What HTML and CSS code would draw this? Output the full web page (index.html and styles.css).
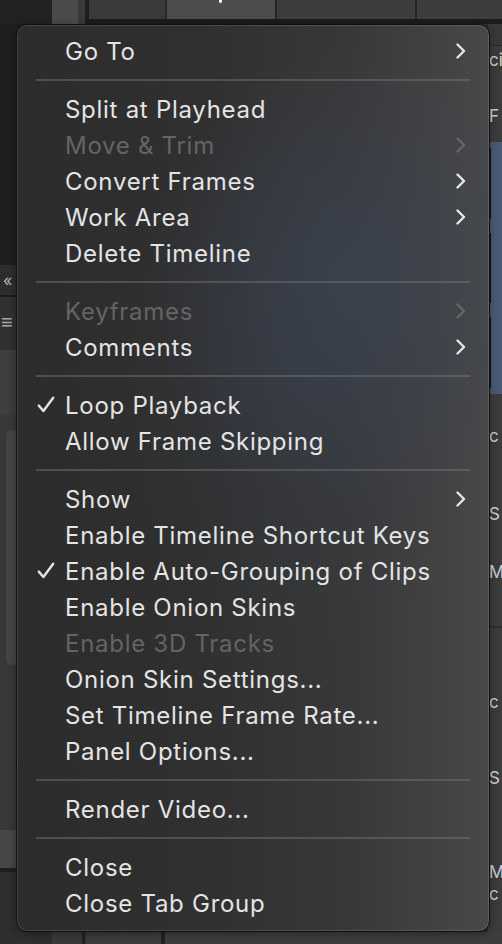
FILE: index.html
```html
<!DOCTYPE html>
<html lang="en">
<head>
<meta charset="utf-8">
<title>Timeline menu</title>
<link rel="stylesheet" href="styles.css">
</head>
<body>
<div class="app">
  <div class="topbar">
    <div class="tb tb-dark"></div>
    <div class="tb tb-light"></div>
    <div class="tb tb-mid"></div>
    <div class="tb tb-gap"></div>
    <div class="tb tb-tab"></div>
    <div class="tb tb-active"><span class="tb-dot"></span></div>
    <div class="tb tb-tab2"></div>
    <div class="tb tb-tab3"></div>
  </div>
  <div class="middle">
    <div class="leftcol">
      <div class="lc lc-dark"></div>
      <div class="lc lc-arrows">&lsaquo;&lsaquo;</div>
      <div class="lc lc-menu">&#8801;</div>
      <div class="lc lc-light"></div>
      <div class="lc lc-panel"><div class="lc-thumb"></div></div>
      <div class="lc lc-band"></div>
      <div class="lc lc-line"></div>
      <div class="lc lc-foot"></div>
    </div>
    <div class="center"></div>
    <div class="rightcol">
      <div class="rc rc-top"></div>
      <div class="rc rc-text rc-ci">ci</div>
      <div class="rc rc-text rc-f">F</div>
      <div class="rc rc-blue">
        <div class="rc-layer"></div>
        <div class="rc-layer"></div>
        <div class="rc-layer"></div>
      </div>
      <div class="rc rc-text rc-t1">c</div>
      <div class="rc rc-text rc-t2">S</div>
      <div class="rc rc-text rc-t3">M</div>
      <div class="rc rc-sep"></div>
      <div class="rc rc-text rc-t4">c</div>
      <div class="rc rc-text rc-t5">S</div>
      <div class="rc rc-text rc-t6">M</div>
      <div class="rc rc-text rc-t7">c</div>
    </div>
  </div>
  <div class="bottombar">
    <div class="bb bb-a"></div>
    <div class="bb bb-b"></div>
    <div class="bb bb-c"></div>
    <div class="bb bb-d"></div>
  </div>
</div>

<div class="menu">
  <div class="item"><span class="label">Go To</span><span class="chev"><svg viewBox="0 0 10 16"><path d="M1.5 1.5 L8 8 L1.5 14.5"/></svg></span></div>
  <div class="sep"></div>
  <div class="item"><span class="label">Split at Playhead</span></div>
  <div class="item disabled"><span class="label">Move &amp; Trim</span><span class="chev"><svg viewBox="0 0 10 16"><path d="M1.5 1.5 L8 8 L1.5 14.5"/></svg></span></div>
  <div class="item"><span class="label">Convert Frames</span><span class="chev"><svg viewBox="0 0 10 16"><path d="M1.5 1.5 L8 8 L1.5 14.5"/></svg></span></div>
  <div class="item"><span class="label">Work Area</span><span class="chev"><svg viewBox="0 0 10 16"><path d="M1.5 1.5 L8 8 L1.5 14.5"/></svg></span></div>
  <div class="item"><span class="label">Delete Timeline</span></div>
  <div class="sep"></div>
  <div class="item disabled"><span class="label">Keyframes</span><span class="chev"><svg viewBox="0 0 10 16"><path d="M1.5 1.5 L8 8 L1.5 14.5"/></svg></span></div>
  <div class="item"><span class="label">Comments</span><span class="chev"><svg viewBox="0 0 10 16"><path d="M1.5 1.5 L8 8 L1.5 14.5"/></svg></span></div>
  <div class="sep"></div>
  <div class="item checked"><span class="check"><svg viewBox="0 0 18 18"><path d="M1.8 9.6 L6.4 15 L16.2 1.8"/></svg></span><span class="label">Loop Playback</span></div>
  <div class="item"><span class="label">Allow Frame Skipping</span></div>
  <div class="sep"></div>
  <div class="item"><span class="label">Show</span><span class="chev"><svg viewBox="0 0 10 16"><path d="M1.5 1.5 L8 8 L1.5 14.5"/></svg></span></div>
  <div class="item"><span class="label">Enable Timeline Shortcut Keys</span></div>
  <div class="item checked"><span class="check"><svg viewBox="0 0 18 18"><path d="M1.8 9.6 L6.4 15 L16.2 1.8"/></svg></span><span class="label">Enable Auto-Grouping of Clips</span></div>
  <div class="item"><span class="label">Enable Onion Skins</span></div>
  <div class="item disabled"><span class="label">Enable 3D Tracks</span></div>
  <div class="item"><span class="label">Onion Skin Settings...</span></div>
  <div class="item"><span class="label">Set Timeline Frame Rate...</span></div>
  <div class="item"><span class="label">Panel Options...</span></div>
  <div class="sep"></div>
  <div class="item"><span class="label">Render Video...</span></div>
  <div class="sep"></div>
  <div class="item"><span class="label">Close</span></div>
  <div class="item"><span class="label">Close Tab Group</span></div>
</div>
</body>
</html>
```

FILE: styles.css
```css
* { box-sizing: border-box; }
html, body {
  margin: 0;
  padding: 0;
  width: 502px;
  height: 944px;
  overflow: hidden;
  background: #3a3a3a;
  font-family: Inter, "Noto Sans", "Liberation Sans", sans-serif;
}

/* ---------- background app ---------- */
.app {
  width: 502px;
  height: 944px;
  display: flex;
  flex-direction: column;
}
.topbar {
  height: 24px;
  display: flex;
  background: #1c1c1c;
}
.tb { height: 19px; }
.tb-dark { width: 52px; height: 24px; background: #222; }
.tb-light { width: 26px; height: 24px; background: #4a4a4a; }
.tb-mid { width: 7px; height: 24px; background: #3a3a3a; }
.tb-gap { width: 4px; height: 24px; background: #1e1e1e; }
.tb-tab { width: 76px; background: #3a3a3a; }
.tb-active {
  width: 110px;
  background: #4c4c4c;
  border-left: 2px solid #2a2a2a;
  padding-left: 52px;
}
.tb-dot {
  display: block;
  width: 3px;
  height: 3px;
  border-radius: 0 0 2px 2px;
  background: #f2f2f2;
}
.tb-tab2 { width: 140px; background: #3d3d3d; border-left: 2px solid #262626; }
.tb-tab3 { flex: 1; background: #3d3d3d; border-left: 2px solid #262626; }

.middle {
  flex: 1;
  display: flex;
}
.leftcol {
  width: 52px;
  display: flex;
  flex-direction: column;
}
.lc { width: 100%; }
.lc-dark { height: 241px; background: #1f1f1f; }
.lc-arrows {
  height: 32px;
  background: #2d2d2d;
  color: #b5b5b5;
  font-size: 16px;
  line-height: 30px;
  padding-left: 3px;
  letter-spacing: -3px;
  border-bottom: 2px solid #1b1b1b;
}
.lc-menu {
  height: 53px;
  background: #313131;
  color: #a8a8a8;
  font-size: 20px;
  line-height: 50px;
  padding-left: 1px;
}
.lc-light { height: 65px; background: #3e3e3e; }
.lc-panel {
  height: 415px;
  background: #383838;
  padding: 15px 0 0 6px;
}
.lc-thumb {
  height: 235px;
  border-radius: 6px;
  background: #464646;
}
.lc-band { height: 38px; background: #474747; }
.lc-line { height: 4px; background: #1e1e1e; }
.lc-foot { flex: 1; background: #2e2e2e; }

.center { flex: 1; background: #2b2b2b; }

.rightcol {
  width: 14px;
  display: flex;
  flex-direction: column;
  background: #3c3c3c;
  overflow: hidden;
  color: #d0d0d0;
  font-size: 17px;
}
.rc { flex: none; }
.rc-top { height: 22px; background: #383838; border-bottom: 1px solid #2a2a2a; }
.rc-text { height: 28px; line-height: 28px; padding-left: 1px; white-space: nowrap; }
.rc-f { margin-top: 28px; }
.rc-blue {
  margin-top: 12px;
  height: 252px;
  background: #4b5b75;
  display: flex;
  flex-direction: column;
  gap: 2px;
}
.rc-layer {
  flex: 1;
  border-left: 3px solid #151515;
  margin: 6px 0;
}
.rc-t1 { margin-top: 28px; }
.rc-t2 { margin-top: 50px; }
.rc-t3 { margin-top: 30px; }
.rc-sep { height: 2px; background: #2e2e2e; margin-top: 40px; }
.rc-t4 { margin-top: 60px; }
.rc-t5 { margin-top: 48px; }
.rc-t6 { margin-top: 66px; }
.rc-t7 { margin-top: -6px; }

.bottombar {
  height: 12px;
  display: flex;
  background: #3a3a3a;
}
.bb-a { width: 52px; background: #2f2f2f; }
.bb-b { width: 33px; background: #3a3a3a; border-right: 3px solid #222; }
.bb-c { width: 80px; background: #3c3c3c; border-left: 1px solid #333; border-right: 4px solid #222; }
.bb-d { flex: 1; background: #3d3d3d; }

/* ---------- context menu ---------- */
.menu {
  position: absolute;
  left: 16px;
  top: 24px;
  width: 474px;
  height: 908px;
  border: 1px solid #0f0f0f;
  border-radius: 11px;
  padding: 8px 0 10px;
  box-shadow: inset 0 0 0 1px rgba(255, 255, 255, 0.13), 0 2px 8px rgba(0, 0, 0, 0.35);
  background:
    radial-gradient(ellipse 42% 26% at 70% 28%, rgba(60, 72, 92, 0.55), rgba(60, 72, 92, 0) 100%),
    radial-gradient(ellipse 40% 30% at 60% 40%, rgba(52, 62, 78, 0.35), rgba(52, 62, 78, 0) 100%),
    linear-gradient(90deg, #2c2c2c 0%, #303030 40%, #383838 70%, #474849 100%);
  overflow: hidden;
  color: #e4e4e4;
}
.item {
  height: 36px;
  display: flex;
  align-items: center;
  padding-left: 48px;
  padding-right: 23px;
  position: relative;
  font-size: 24px;
  letter-spacing: 0.72px;
}
.item .label { flex: 1; white-space: nowrap; }
.item.disabled { color: #646464; }
.chev {
  width: 10px;
  height: 16px;
  display: flex;
}
.chev svg { width: 10px; height: 16px; }
.chev path {
  fill: none;
  stroke: #e8e8e8;
  stroke-width: 2.4;
  stroke-linecap: round;
  stroke-linejoin: round;
}
.disabled .chev path { stroke: #666; }
.check {
  position: absolute;
  left: 20px;
  top: 9px;
  width: 18px;
  height: 18px;
  display: flex;
}
.check svg { width: 18px; height: 18px; }
.check path {
  fill: none;
  stroke: #e6e6e6;
  stroke-width: 2.4;
  stroke-linecap: round;
  stroke-linejoin: round;
}
.sep {
  height: 22px;
  padding: 10px 19px;
}
.sep::before {
  content: "";
  display: block;
  height: 2px;
  background: rgba(120, 120, 120, 0.45);
}
```
